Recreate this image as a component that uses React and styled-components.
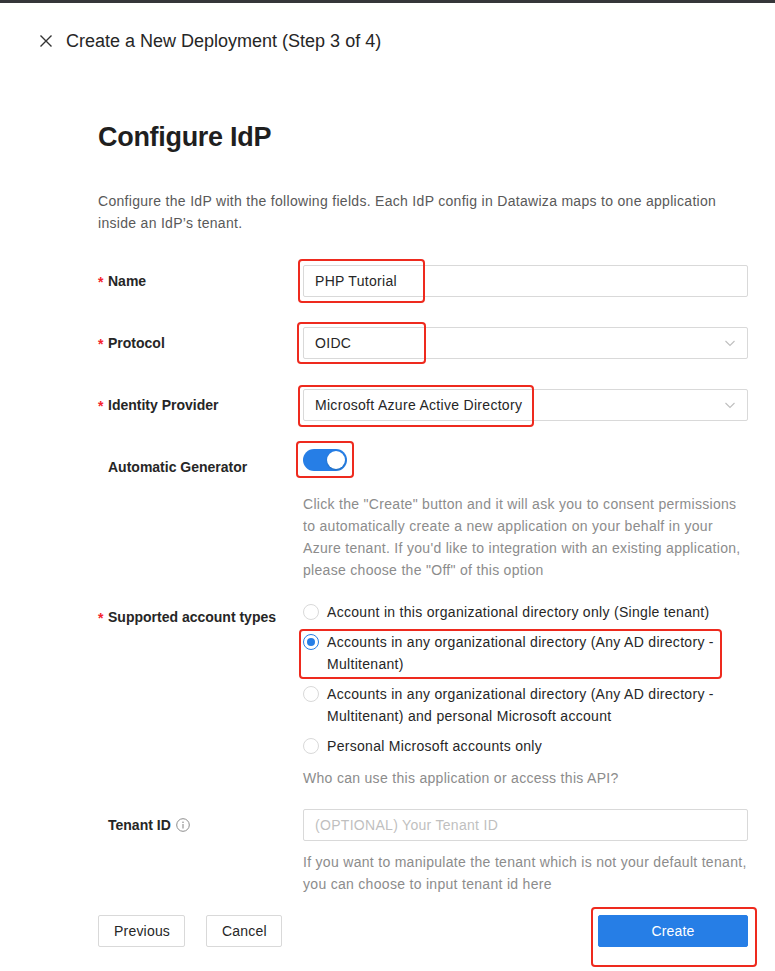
import React from "react";
import styled, { createGlobalStyle } from "styled-components";

const GlobalStyle = createGlobalStyle`
  html, body { margin: 0; padding: 0; background: #fff; }
  body { font-family: "Liberation Sans", Arial, Helvetica, sans-serif; color: #262626; }
  * { box-sizing: border-box; }
`;

const BLUE = "#267ee6";
const RED = "#ee2a1e";

const Page = styled.div`
  width: 775px;
  min-height: 971px;
  background: #fff;
`;

const TopBar = styled.div`
  height: 3px;
  background: #35363a;
`;

const Header = styled.div`
  display: flex;
  align-items: center;
  gap: 14px;
  height: 32px;
  margin-top: 22px;
  padding-left: 40px;
  font-size: 18px;
  color: #262626;
`;

const CloseBtn = styled.span`
  display: inline-flex;
  width: 12px;
  height: 12px;
`;

const Content = styled.div`
  padding-left: 98px;
  width: 748px;
`;

const Title = styled.h1`
  margin: 62px 0 0;
  font-size: 27px;
  line-height: 36px;
  font-weight: 700;
  letter-spacing: -0.3px;
  color: #1f1f1f;
`;

const Description = styled.p`
  margin: 35px 0 0;
  font-size: 14px;
  line-height: 22px;
  letter-spacing: 0.3px;
  color: #595959;
`;

const Form = styled.div`
  margin-top: 31px;
  display: flex;
  flex-direction: column;
`;

const Row = styled.div`
  display: grid;
  grid-template-columns: 205px 445px;
  margin-bottom: ${(p) => p.$mb || 0}px;
`;

const Label = styled.div`
  height: ${(p) => p.$h || 32}px;
  display: flex;
  align-items: center;
  font-size: 14px;
  font-weight: 700;
  color: #262626;
  padding-left: 10px;
  position: relative;
`;

const Star = styled.span`
  position: absolute;
  left: 0;
  top: 9px;
  color: #f5222d;
  font-size: 14px;
  font-weight: 700;
`;

const Control = styled.div`
  display: flex;
  flex-direction: column;
`;

const Marked = styled.div`
  position: relative;
  display: ${(p) => (p.$inline ? "inline-flex" : "flex")};
  align-self: ${(p) => (p.$inline ? "flex-start" : "stretch")};
`;

const Highlight = styled.span`
  position: absolute;
  border: 2px solid ${RED};
  border-radius: 4px;
  pointer-events: none;
`;

const Input = styled.div`
  width: 100%;
  height: 32px;
  border: 1px solid #d9d9d9;
  border-radius: 2px;
  padding: 0 11px;
  display: flex;
  align-items: center;
  justify-content: space-between;
  font-size: 14px;
  letter-spacing: 0.3px;
  color: ${(p) => (p.$placeholder ? "#bfbfbf" : "#262626")};
  background: #fff;
`;

const SwitchRow = styled.div`
  height: 32px;
  display: flex;
  align-items: center;
`;

const Switch = styled.span`
  position: relative;
  display: inline-block;
  width: 44px;
  height: 22px;
  border-radius: 11px;
  background: ${BLUE};
`;

const Knob = styled.span`
  position: absolute;
  top: 2px;
  right: 2px;
  width: 18px;
  height: 18px;
  border-radius: 50%;
  background: #fff;
  box-shadow: 0 1px 2px rgba(0, 35, 11, 0.2);
`;

const Help = styled.div`
  margin-top: ${(p) => p.$mt || 10}px;
  font-size: 14px;
  line-height: 22px;
  letter-spacing: 0.3px;
  color: #8c8c8c;
  white-space: nowrap;
`;

const RadioGroup = styled.div`
  display: flex;
  flex-direction: column;
  gap: 8px;
`;

const RadioItem = styled.label`
  position: relative;
  display: flex;
  align-items: flex-start;
  gap: 8px;
  font-size: 14px;
  line-height: 22px;
  letter-spacing: 0.3px;
  color: #262626;
`;

const RadioCircle = styled.span`
  flex: none;
  margin-top: 3px;
  width: 16px;
  height: 16px;
  border-radius: 50%;
  border: 1px solid ${(p) => (p.$checked ? BLUE : "#d9d9d9")};
  display: flex;
  align-items: center;
  justify-content: center;
  background: #fff;
  &::after {
    content: "";
    width: 8px;
    height: 8px;
    border-radius: 50%;
    background: ${(p) => (p.$checked ? BLUE : "transparent")};
  }
`;

const InfoIcon = styled.span`
  display: inline-flex;
  margin-left: 5px;
`;

const Footer = styled.div`
  margin-top: 20px;
  display: flex;
  align-items: center;
  width: 650px;
`;

const Button = styled.button`
  height: 32px;
  padding: 0 15px;
  font-family: inherit;
  font-size: 14px;
  letter-spacing: 0.2px;
  border-radius: 2px;
  border: 1px solid ${(p) => (p.$primary ? BLUE : "#d9d9d9")};
  background: ${(p) => (p.$primary ? BLUE : "#fff")};
  color: ${(p) => (p.$primary ? "#fff" : "#262626")};
  width: ${(p) => p.$w}px;
  margin-right: ${(p) => p.$mr || 0}px;
`;

const Spacer = styled.div`
  flex: 1;
`;

const Chevron = () => (
  <svg width="12" height="12" viewBox="0 0 12 12" fill="none">
    <path d="M1.5 4 L6 8.5 L10.5 4" stroke="#bfbfbf" strokeWidth="1.1" />
  </svg>
);

const Mark = ({ l, t, w, h }) => (
  <Highlight style={{ left: l, top: t, width: w, height: h }} />
);

export default function App() {
  return (
    <Page>
      <GlobalStyle />
      <TopBar />
      <Header>
        <CloseBtn>
          <svg width="12" height="12" viewBox="0 0 12 12" fill="none">
            <path d="M0.5 0.5 L11.5 11.5 M11.5 0.5 L0.5 11.5" stroke="#333" strokeWidth="1.4" />
          </svg>
        </CloseBtn>
        <span>Create a New Deployment (Step 3 of 4)</span>
      </Header>
      <Content>
        <Title>Configure IdP</Title>
        <Description>
          Configure the IdP with the following fields. Each IdP config in Datawiza maps to one application
          <br />
          inside an IdP’s tenant.
        </Description>
        <Form>
          <Row $mb={30}>
            <Label><Star>*</Star>Name</Label>
            <Control>
              <Marked>
                <Input>PHP Tutorial</Input>
                <Mark l={-5} t={-6} w={127} h={44} />
              </Marked>
            </Control>
          </Row>
          <Row $mb={30}>
            <Label><Star>*</Star>Protocol</Label>
            <Control>
              <Marked>
                <Input>OIDC<Chevron /></Input>
                <Mark l={-6} t={-5} w={129} h={42} />
              </Marked>
            </Control>
          </Row>
          <Row $mb={28}>
            <Label><Star>*</Star>Identity Provider</Label>
            <Control>
              <Marked>
                <Input>Microsoft Azure Active Directory<Chevron /></Input>
                <Mark l={-5} t={-4} w={236} h={42} />
              </Marked>
            </Control>
          </Row>
          <Row $mb={20}>
            <Label $h={36}>Automatic Generator</Label>
            <Control>
              <SwitchRow>
                <Marked $inline>
                  <Switch><Knob /></Switch>
                  <Mark l={-7} t={-8} w={58} h={37} />
                </Marked>
              </SwitchRow>
              <Help $mt={12}>
                Click the "Create" button and it will ask you to consent permissions
                <br />
                to automatically create a new application on your behalf in your
                <br />
                Azure tenant. If you'd like to integration with an existing application,
                <br />
                please choose the "Off" of this option
              </Help>
            </Control>
          </Row>
          <Row $mb={20}>
            <Label><Star>*</Star>Supported account types</Label>
            <Control>
              <RadioGroup>
                <RadioItem>
                  <RadioCircle />
                  <span>Account in this organizational directory only (Single tenant)</span>
                </RadioItem>
                <RadioItem>
                  <RadioCircle $checked />
                  <span>Accounts in any organizational directory (Any AD directory - Multitenant)</span>
                  <Mark l={-4} t={-2} w={423} h={50} />
                </RadioItem>
                <RadioItem>
                  <RadioCircle />
                  <span>
                    Accounts in any organizational directory (Any AD directory - Multitenant) and personal Microsoft
                    account
                  </span>
                </RadioItem>
                <RadioItem>
                  <RadioCircle />
                  <span>Personal Microsoft accounts only</span>
                </RadioItem>
              </RadioGroup>
              <Help>Who can use this application or access this API?</Help>
            </Control>
          </Row>
          <Row>
            <Label>
              Tenant ID
              <InfoIcon>
                <svg width="14" height="14" viewBox="0 0 14 14" fill="none">
                  <circle cx="7" cy="7" r="6.3" stroke="#8c8c8c" strokeWidth="1" />
                  <circle cx="7" cy="4.2" r="0.8" fill="#8c8c8c" />
                  <path d="M7 6 V10.4" stroke="#8c8c8c" strokeWidth="1.1" />
                </svg>
              </InfoIcon>
            </Label>
            <Control>
              <Input $placeholder>(OPTIONAL) Your Tenant ID</Input>
              <Help>
                If you want to manipulate the tenant which is not your default tenant,
                <br />
                you can choose to input tenant id here
              </Help>
            </Control>
          </Row>
        </Form>
        <Footer>
          <Button $w={87} $mr={21}>Previous</Button>
          <Button $w={76}>Cancel</Button>
          <Spacer />
          <Marked $inline>
            <Button $primary $w={150}>Create</Button>
            <Mark l={-7} t={-8} w={166} h={60} />
          </Marked>
        </Footer>
      </Content>
    </Page>
  );
}
